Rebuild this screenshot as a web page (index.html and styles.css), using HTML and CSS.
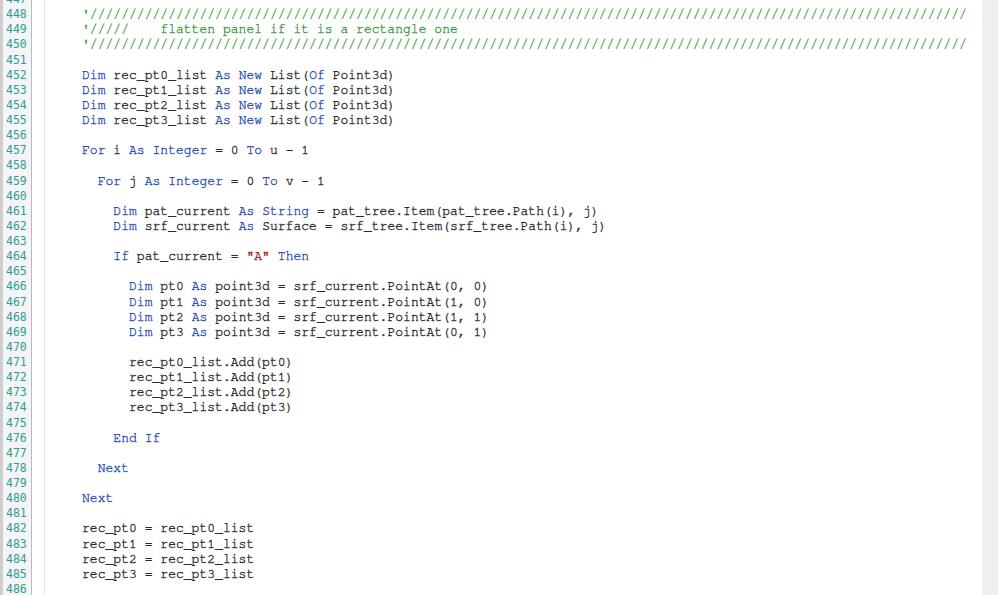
FILE: index.html
```html
<!DOCTYPE html>
<html>
<head>
<meta charset="utf-8">
<link rel="stylesheet" href="styles.css">
</head>
<body>
<div class="editor">
  <div class="gutter">
    <div class="ln">447</div><div class="ln">448</div><div class="ln">449</div><div class="ln">450</div><div class="ln">451</div><div class="ln">452</div><div class="ln">453</div><div class="ln">454</div><div class="ln">455</div><div class="ln">456</div><div class="ln">457</div><div class="ln">458</div><div class="ln">459</div><div class="ln">460</div><div class="ln">461</div><div class="ln">462</div><div class="ln">463</div><div class="ln">464</div><div class="ln">465</div><div class="ln">466</div><div class="ln">467</div><div class="ln">468</div><div class="ln">469</div><div class="ln">470</div><div class="ln">471</div><div class="ln">472</div><div class="ln">473</div><div class="ln">474</div><div class="ln">475</div><div class="ln">476</div><div class="ln">477</div><div class="ln">478</div><div class="ln">479</div><div class="ln">480</div><div class="ln">481</div><div class="ln">482</div><div class="ln">483</div><div class="ln">484</div><div class="ln">485</div><div class="ln">486</div>
  </div>
  <div class="fold"></div>
  <div class="code">
<div class="l"> </div>
<div class="l"><span class="c">'////////////////////////////////////////////////////////////////////////////////////////////////////////////////</span></div>
<div class="l"><span class="c">'/////    flatten panel if it is a rectangle one</span></div>
<div class="l"><span class="c">'////////////////////////////////////////////////////////////////////////////////////////////////////////////////</span></div>
<div class="l"> </div>
<div class="l"><span class="k">Dim</span> rec_pt0_list <span class="k">As</span> <span class="k">New</span> List(<span class="k">Of</span> Point3d)</div>
<div class="l"><span class="k">Dim</span> rec_pt1_list <span class="k">As</span> <span class="k">New</span> List(<span class="k">Of</span> Point3d)</div>
<div class="l"><span class="k">Dim</span> rec_pt2_list <span class="k">As</span> <span class="k">New</span> List(<span class="k">Of</span> Point3d)</div>
<div class="l"><span class="k">Dim</span> rec_pt3_list <span class="k">As</span> <span class="k">New</span> List(<span class="k">Of</span> Point3d)</div>
<div class="l"> </div>
<div class="l"><span class="k">For</span> i <span class="k">As</span> <span class="k">Integer</span> = 0 <span class="k">To</span> u - 1</div>
<div class="l"> </div>
<div class="l">  <span class="k">For</span> j <span class="k">As</span> <span class="k">Integer</span> = 0 <span class="k">To</span> v - 1</div>
<div class="l"> </div>
<div class="l">    <span class="k">Dim</span> pat_current <span class="k">As</span> <span class="k">String</span> = pat_tree.Item(pat_tree.Path(i), j)</div>
<div class="l">    <span class="k">Dim</span> srf_current <span class="k">As</span> Surface = srf_tree.Item(srf_tree.Path(i), j)</div>
<div class="l"> </div>
<div class="l">    <span class="k">If</span> pat_current = <span class="s">"A"</span> <span class="k">Then</span></div>
<div class="l"> </div>
<div class="l">      <span class="k">Dim</span> pt0 <span class="k">As</span> point3d = srf_current.PointAt(0, 0)</div>
<div class="l">      <span class="k">Dim</span> pt1 <span class="k">As</span> point3d = srf_current.PointAt(1, 0)</div>
<div class="l">      <span class="k">Dim</span> pt2 <span class="k">As</span> point3d = srf_current.PointAt(1, 1)</div>
<div class="l">      <span class="k">Dim</span> pt3 <span class="k">As</span> point3d = srf_current.PointAt(0, 1)</div>
<div class="l"> </div>
<div class="l">      rec_pt0_list.Add(pt0)</div>
<div class="l">      rec_pt1_list.Add(pt1)</div>
<div class="l">      rec_pt2_list.Add(pt2)</div>
<div class="l">      rec_pt3_list.Add(pt3)</div>
<div class="l"> </div>
<div class="l">    <span class="k">End</span> <span class="k">If</span></div>
<div class="l"> </div>
<div class="l">  <span class="k">Next</span></div>
<div class="l"> </div>
<div class="l"><span class="k">Next</span></div>
<div class="l"> </div>
<div class="l">rec_pt0 = rec_pt0_list</div>
<div class="l">rec_pt1 = rec_pt1_list</div>
<div class="l">rec_pt2 = rec_pt2_list</div>
<div class="l">rec_pt3 = rec_pt3_list</div>
<div class="l"> </div>
  </div>
  <div class="vscroll"></div>
</div>
</body>
</html>
```

FILE: styles.css
```css
html, body {
  margin: 0;
  padding: 0;
  background: #ffffff;
  overflow: hidden;
}

.editor {
  display: flex;
  width: 1000px;
  height: 595px;
  overflow: hidden;
  background: #ffffff;
}

.gutter {
  width: 25px;
  flex: none;
  background: #f5f5f5;
  border-left: 3px solid #cfcfcf;
  border-right: 1px solid #b9b9b9;
  margin-top: -8px;
  padding-left: 3px;
  box-sizing: content-box;
}

.ln {
  font-family: "DejaVu Sans Mono", "Liberation Mono", monospace;
  font-size: 11.5px;
  line-height: 15.135px;
  height: 15.135px;
  color: #2f9b9b;
  white-space: pre;
}

.fold {
  width: 12px;
  flex: none;
  border-right: 1px solid #e4e4e4;
}

.code {
  flex: 1;
  margin-top: -8px;
  padding-left: 37px;
  font-family: "Nimbus Mono PS", "Nimbus Mono L", "FreeMono", "Courier New", "Liberation Mono", monospace;
  font-size: 13px;
  letter-spacing: 0.03px;
  color: #2a2a2a;
  -webkit-text-stroke: 0.35px currentColor;
  overflow: hidden;
}

.l {
  line-height: 15.135px;
  height: 15.135px;
  white-space: pre;
}

.k {
  color: #2d4fb4;
}

.c {
  color: #3b9a3b;
}

.s {
  color: #a82020;
}

.vscroll {
  width: 16px;
  flex: none;
  background: #efefef;
  margin-right: 2px;
}
```
